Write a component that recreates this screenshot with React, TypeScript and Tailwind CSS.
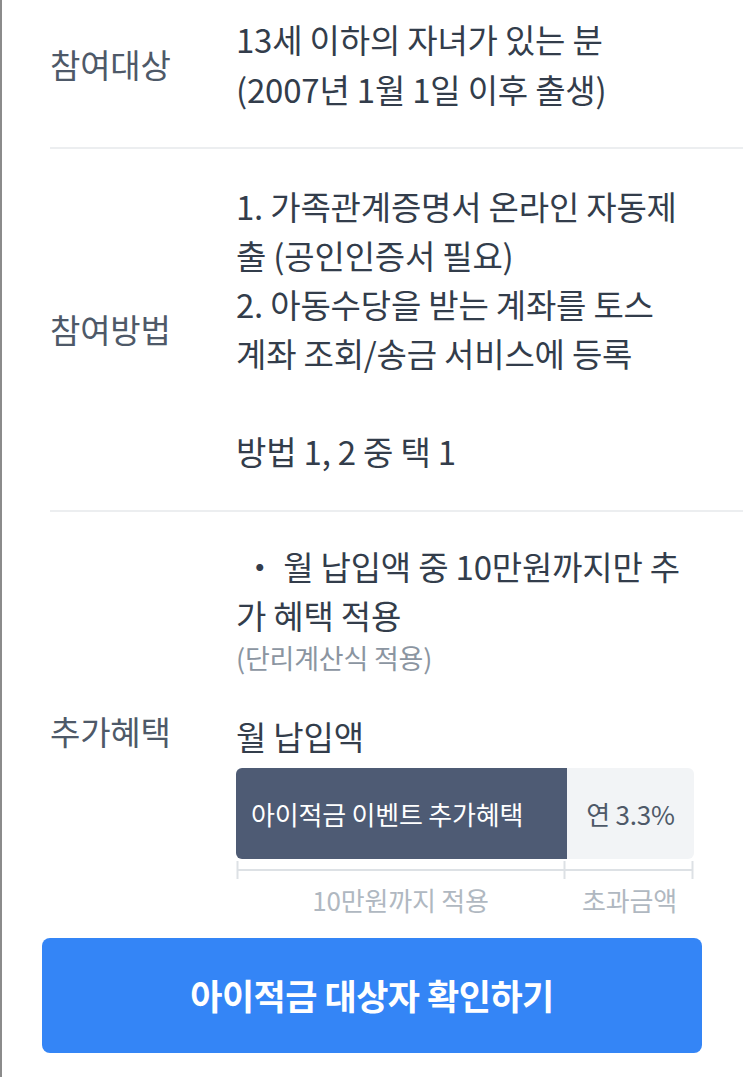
import React from 'react';

const font = { fontFamily: '"Noto Sans CJK KR", "Noto Sans", sans-serif' };

const Row: React.FC<{ label: string; className?: string; children: React.ReactNode }> = ({ label, className, children }) => {
    return (
        <div className={`flex items-center ${className ?? ''}`}>
            <div className="w-[186px] shrink-0 text-[33px] leading-[49px] text-[#4e5968]">{label}</div>
            <div className="flex-1 text-[33px] leading-[49px] text-[#333d4b] whitespace-nowrap">{children}</div>
        </div>
    );
};

const App: React.FC = () => {
    return (
        <div className="min-h-screen w-full bg-white border-l-2 border-[#8b8b8b] tracking-[-0.2px]" style={font}>
            <div className="ml-[48px]">
                <Row label="참여대상" className="pt-[14px] pb-[33px] border-b-2 border-[#eceef0]">
                    <div className="leading-[50px]">13세 이하의 자녀가 있는 분</div>
                    <div className="leading-[50px]">(2007년 1월 1일 이후 출생)</div>
                </Row>

                <Row label="참여방법" className="pt-[33px] pb-[34px] border-b-2 border-[#eceef0]">
                    <div>1. 가족관계증명서 온라인 자동제</div>
                    <div>출 (공인인증서 필요)</div>
                    <div>2. 아동수당을 받는 계좌를 토스</div>
                    <div>계좌 조회/송금 서비스에 등록</div>
                    <div>&nbsp;</div>
                    <div>방법 1, 2 중 택 1</div>
                </Row>

                <Row label="추가혜택" className="pt-[30px]">
                    <div>&nbsp;・ 월 납입액 중 10만원까지만 추</div>
                    <div>가 혜택 적용</div>
                    <div className="text-[27px] leading-[36px] text-[#8b95a1]">(단리계산식 적용)</div>
                    <div className="mt-[36px]">월 납입액</div>

                    <div className="mt-[7px] w-[458px] h-[91px] flex rounded-[6px] overflow-hidden">
                        <div className="w-[331px] bg-[#4e5b74] flex items-center pl-[15px] text-[26px] text-white">
                            아이적금 이벤트 추가혜택
                        </div>
                        <div className="flex-1 bg-[#f2f4f6] flex items-center justify-center text-[26px] text-[#4e5968]">
                            연 3.3%
                        </div>
                    </div>

                    <svg width="458" height="20" className="mt-[1px] block" viewBox="0 0 458 20">
                        <line x1="1.5" y1="10" x2="456.5" y2="10" stroke="#dde1e5" strokeWidth="2" />
                        <line x1="1.5" y1="1" x2="1.5" y2="19" stroke="#dde1e5" strokeWidth="2" />
                        <line x1="328.5" y1="1" x2="328.5" y2="19" stroke="#dde1e5" strokeWidth="2" />
                        <line x1="456.5" y1="1" x2="456.5" y2="19" stroke="#dde1e5" strokeWidth="2" />
                    </svg>
                    <div className="w-[458px] flex text-[26px] leading-[40px] text-[#b0b8c1]">
                        <div className="w-[329px] text-center">10만원까지 적용</div>
                        <div className="flex-1 text-center">초과금액</div>
                    </div>
                </Row>
            </div>

            <div className="ml-[40px] mt-[18px] w-[660px] h-[115px] rounded-[8px] bg-[#3485f6] flex items-center justify-center">
                <span className="text-[35px] font-bold text-white tracking-[-0.5px]">아이적금 대상자 확인하기</span>
            </div>
        </div>
    );
};

export default App;
